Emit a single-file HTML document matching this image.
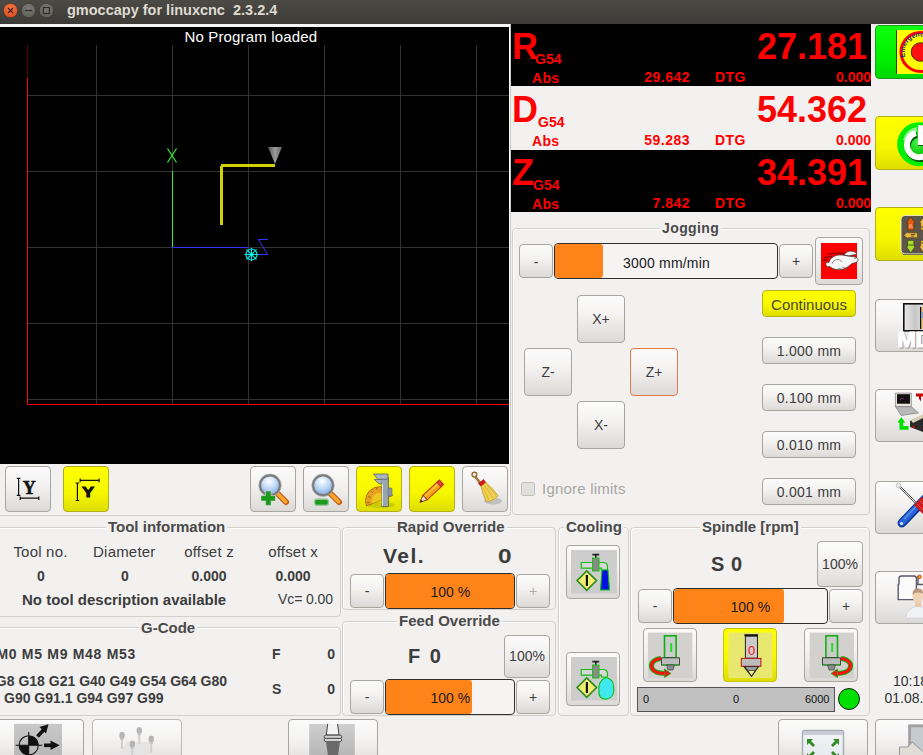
<!DOCTYPE html>
<html><head><meta charset="utf-8">
<style>
*{box-sizing:border-box;margin:0;padding:0}
html,body{width:923px;height:755px;overflow:hidden;background:#f2f1f0;font-family:"Liberation Sans",sans-serif;color:#3c3c3c;position:relative}
.a{position:absolute}
.btn{position:absolute;border:1px solid #a9a5a0;border-radius:4px;background:linear-gradient(#fbfbfb,#f4f3f2 40%,#dcdad7);}
.ybtn{position:absolute;border:1px solid #b4ae1c;border-radius:4px;background:linear-gradient(#ffff00,#f6f600 60%,#dede00);}
.frame{position:absolute;border:1px solid #d3cfca;border-radius:4px;box-shadow:inset 1px 1px 0 #fff}
.ftitle{position:absolute;background:#f2f1f0;font-weight:bold;font-size:14px;color:#4a4a4a;padding:0 2px;line-height:16px;white-space:nowrap}
.t{position:absolute;white-space:nowrap;line-height:1}
.red{color:#ff0000;font-weight:bold}
</style></head><body>
<!-- title bar -->
<div class="a" style="left:0;top:0;width:923px;height:24px;background:linear-gradient(#4b4a45,#3c3b37)"></div>

<svg class="a" style="left:0;top:0" width="60" height="22">
<defs><radialGradient id="cl" cx="0.5" cy="0.35" r="0.7"><stop offset="0" stop-color="#f47a48"/><stop offset="1" stop-color="#d9461c"/></radialGradient>
<radialGradient id="gr" cx="0.5" cy="0.35" r="0.7"><stop offset="0" stop-color="#7c7b76"/><stop offset="1" stop-color="#5c5b56"/></radialGradient></defs>
<circle cx="10.5" cy="10.5" r="7.3" fill="url(#cl)" stroke="#37362f" stroke-width="0.8"/>
<path d="M8 8 L13 13 M13 8 L8 13" stroke="#3a2010" stroke-width="1.1"/>
<circle cx="28.5" cy="10.5" r="7.3" fill="url(#gr)" stroke="#37362f" stroke-width="0.8"/>
<path d="M25 10.5 H32" stroke="#2e2d29" stroke-width="1.2"/>
<circle cx="46.4" cy="10.5" r="7.3" fill="url(#gr)" stroke="#37362f" stroke-width="0.8"/>
<rect x="43.4" y="7.5" width="6" height="6" fill="none" stroke="#2e2d29" stroke-width="1.2"/>
</svg>
<div class="t" style="left:67px;top:3px;font-size:14.5px;font-weight:bold;color:#dfdbd2">gmoccapy for linuxcnc&nbsp; 2.3.2.4</div>

<!-- graphics -->
<div class="a" style="left:0;top:24px;width:511px;height:3px;background:#f6f5f4"></div>
<div class="a" style="left:0;top:27px;width:509px;height:437px;background:#000;overflow:hidden">
<svg width="510" height="437" style="position:absolute;left:0;top:0">
<rect x="96" y="18" width="1" height="359" fill="#333333"/>
<rect x="172" y="18" width="1" height="359" fill="#333333"/>
<rect x="248" y="18" width="1" height="359" fill="#333333"/>
<rect x="324" y="18" width="1" height="359" fill="#333333"/>
<rect x="400" y="18" width="1" height="359" fill="#333333"/>
<rect x="476" y="18" width="1" height="359" fill="#333333"/>
<rect x="28" y="68" width="482" height="1" fill="#333333"/>
<rect x="28" y="144" width="482" height="1" fill="#333333"/>
<rect x="28" y="220" width="482" height="1" fill="#333333"/>
<rect x="28" y="296" width="482" height="1" fill="#333333"/>
<rect x="28" y="372" width="482" height="1" fill="#333333"/>
<rect x="27" y="18" width="1" height="33" fill="#5a0000"/>
<rect x="27" y="51" width="1" height="327" fill="#ff0000"/>
<rect x="27" y="377" width="483" height="1" fill="#ff0000"/>
<rect x="172" y="144" width="1" height="76" fill="#33ee33"/>
<path d="M167.5 121.5 L176.5 135.5 M176.5 121.5 L167.5 135.5" stroke="#33ee33" stroke-width="1.2" fill="none"/>
<rect x="172" y="220" width="76" height="1" fill="#3333ff"/>
<path d="M258 212.5 H268 M258.5 212.5 L267.5 227.5 M257 227.5 H268" stroke="#3333ff" stroke-width="1" fill="none"/>
<rect x="220" y="139" width="3" height="59" fill="#d2d200"/>
<rect x="221" y="137" width="54" height="3" fill="#d2d200"/>
<defs><linearGradient id="cg" x1="0" x2="1"><stop offset="0" stop-color="#555"/><stop offset="0.5" stop-color="#9a9a9a"/><stop offset="1" stop-color="#666"/></linearGradient></defs>
<path d="M268 120 L282 120 L275 137 Z" fill="url(#cg)"/>
<circle cx="251.5" cy="227.5" r="5.5" stroke="#00e8e8" stroke-width="1.2" fill="none"/>
<path d="M244.5 227.5 H258.5 M251.5 221.0 V234.0 M246.5 222.5 L256.5 232.5 M256.5 222.5 L246.5 232.5" stroke="#00e8e8" stroke-width="1.1" fill="none"/>
<circle cx="251.5" cy="227.5" r="1.5" fill="#00ffff"/>
</svg>
<div class="t" style="left:184.5px;top:2px;font-size:15px;color:#fff;letter-spacing:0.15px">No Program loaded</div>
</div>

<!-- DRO -->
<div class="a" style="left:511px;top:24px;width:360px;height:62px;background:#000"></div>
<div class="t red" style="left:512px;top:29px;font-size:36px">R</div>
<div class="t red" style="left:535px;top:52px;font-size:14px">G54</div>
<div class="t red" style="left:532px;top:71px;font-size:14px;letter-spacing:0.3px">Abs</div>
<div class="t red" style="right:56px;top:29px;font-size:36px">27.181</div>
<div class="t red" style="right:233px;top:70px;font-size:14px;letter-spacing:0.5px">29.642</div>
<div class="t red" style="left:715px;top:70px;font-size:14px;letter-spacing:0.4px">DTG</div>
<div class="t red" style="right:52px;top:70px;font-size:14px">0.000</div>
<div class="t red" style="left:512px;top:92px;font-size:36px">D</div>
<div class="t red" style="left:538px;top:115px;font-size:14px">G54</div>
<div class="t red" style="left:532px;top:134px;font-size:14px;letter-spacing:0.3px">Abs</div>
<div class="t red" style="right:56px;top:92px;font-size:36px">54.362</div>
<div class="t red" style="right:233px;top:133px;font-size:14px;letter-spacing:0.5px">59.283</div>
<div class="t red" style="left:715px;top:133px;font-size:14px;letter-spacing:0.4px">DTG</div>
<div class="t red" style="right:52px;top:133px;font-size:14px">0.000</div>
<div class="a" style="left:511px;top:150px;width:360px;height:62px;background:#000"></div>
<div class="t red" style="left:512px;top:155px;font-size:36px">Z</div>
<div class="t red" style="left:533px;top:178px;font-size:14px">G54</div>
<div class="t red" style="left:532px;top:197px;font-size:14px;letter-spacing:0.3px">Abs</div>
<div class="t red" style="right:56px;top:155px;font-size:36px">34.391</div>
<div class="t red" style="right:233px;top:196px;font-size:14px;letter-spacing:0.5px">7.842</div>
<div class="t red" style="left:715px;top:196px;font-size:14px;letter-spacing:0.4px">DTG</div>
<div class="t red" style="right:52px;top:196px;font-size:14px">0.000</div>
<!-- /DRO -->
<!-- TOOLBAR -->

<div class="btn" style="left:5px;top:466px;width:46px;height:46px"><svg width="44" height="44" style="position:absolute;left:0;top:0"><path d="M12.6 11.4 V28.3 M10.8 11.4 H14.4 M10.8 28.3 H14.4" stroke="#111" stroke-width="1.2" fill="none"/>
<text x="16.8" y="27" style="font-family:'Liberation Serif';font-weight:bold;font-size:18px" fill="#111" stroke="#111" stroke-width="0.5">Y</text>
<path d="M14.2 31.2 H32.8 M14.2 29.5 V33 M32.8 29.5 V33" stroke="#111" stroke-width="1.2" fill="none"/></svg></div>
<div class="ybtn" style="left:63px;top:466px;width:46px;height:46px"><svg width="44" height="44" style="position:absolute;left:0;top:0"><path d="M13.4 16 V33.5 M11.6 16 H15.2 M11.6 33.5 H15.2" stroke="#111" stroke-width="1.2" fill="none"/>
<text x="18.4" y="29.9" style="font-family:'Liberation Sans';font-weight:bold;font-size:15px" fill="#111" stroke="#111" stroke-width="1" transform="translate(-3.5,0) scale(1.18,1)">Y</text>
<path d="M16.2 13.4 H35.1 M16.2 11.6 V15.2 M35.1 11.6 V15.2" stroke="#111" stroke-width="1.2" fill="none"/></svg></div>
<div class="btn" style="left:250px;top:466px;width:46px;height:46px"><svg width="44" height="44" style="position:absolute;left:0;top:0"><defs><radialGradient id="mgp" cx="0.45" cy="0.3" r="0.75"><stop offset="0" stop-color="#ffffff"/><stop offset="0.45" stop-color="#c4dcf8"/><stop offset="1" stop-color="#78a8e4"/></radialGradient></defs>
<path d="M26.5 26.5 L35 35" stroke="#c4560a" stroke-width="6" stroke-linecap="round"/><path d="M26.8 26.8 L34.7 34.7" stroke="#f8a830" stroke-width="3.6" stroke-linecap="round"/>
<circle cx="19" cy="18.3" r="10" fill="url(#mgp)" stroke="#7c7c7c" stroke-width="2.4"/>
<circle cx="19" cy="18.3" r="11.3" fill="none" stroke="#b0b0b0" stroke-width="0.6"/><path d="M10.5 29 H15 V24.5 H19.5 V29 H24 V33.5 H19.5 V38 H15 V33.5 H10.5 Z" fill="#1c9a1c" stroke="#c8e8c8" stroke-width="1.4" paint-order="stroke"/><path d="M10.5 29 H15 V24.5 H19.5 V29 H24 V33.5 H19.5 V38 H15 V33.5 H10.5 Z" fill="#1c9a1c" stroke="#5a9a5a" stroke-width="0.5"/></svg></div>
<div class="btn" style="left:303px;top:466px;width:46px;height:46px"><svg width="44" height="44" style="position:absolute;left:0;top:0"><defs><radialGradient id="mgm" cx="0.45" cy="0.3" r="0.75"><stop offset="0" stop-color="#ffffff"/><stop offset="0.45" stop-color="#c4dcf8"/><stop offset="1" stop-color="#78a8e4"/></radialGradient></defs>
<path d="M26.5 26.5 L35 35" stroke="#c4560a" stroke-width="6" stroke-linecap="round"/><path d="M26.8 26.8 L34.7 34.7" stroke="#f8a830" stroke-width="3.6" stroke-linecap="round"/>
<circle cx="19" cy="18.3" r="10" fill="url(#mgm)" stroke="#7c7c7c" stroke-width="2.4"/>
<circle cx="19" cy="18.3" r="11.3" fill="none" stroke="#b0b0b0" stroke-width="0.6"/><rect x="10.5" y="32" width="14" height="6.4" rx="2" fill="#1c9a1c" stroke="#c8e8c8" stroke-width="1.4"/><rect x="10.5" y="32" width="14" height="6.4" rx="2" fill="none" stroke="#5a9a5a" stroke-width="0.5"/></svg></div>
<div class="ybtn" style="left:356px;top:466px;width:46px;height:46px"><svg width="44" height="44" style="position:absolute;left:0;top:0"><ellipse cx="24" cy="38" rx="14" ry="3" fill="#000" opacity="0.12"/>
<g transform="rotate(-22 21 30)"><path d="M7 34 A14 14 0 0 1 35 34 Z" fill="#e8a020" stroke="#a86a10" stroke-width="0.8"/>
<path d="M13 34 A8 8 0 0 1 29 34 Z" fill="#f0e020" opacity="0.6"/>
<path d="M9 31 L11 32 M12 26 L14 27.5 M17 22 L18 24 M23 21 L23 23 M29 23 L28 25" stroke="#8a5a10" stroke-width="0.7"/></g>
<rect x="25" y="10.5" width="6.5" height="29" fill="#9ba5ae" stroke="#5a636b" stroke-width="0.8"/>
<path d="M25.5 11 V38.5" stroke="#d8e0e6" stroke-width="1"/>
<path d="M16.5 7 H31 V12.3 H21 Z" fill="#a9b3bb" stroke="#5a636b" stroke-width="0.8"/>
<path d="M17.3 12.5 H25 V16.8 H22 Z" fill="#a9b3bb" stroke="#5a636b" stroke-width="0.8"/>
<rect x="31" y="21" width="4" height="8" rx="1" fill="#8d979f" stroke="#5a636b" stroke-width="0.6"/></svg></div>
<div class="ybtn" style="left:409px;top:466px;width:46px;height:46px"><svg width="44" height="44" style="position:absolute;left:0;top:0"><g transform="rotate(-43 23 23)"><rect x="12" y="20" width="20" height="6.2" fill="#f7a21a" stroke="#b83010" stroke-width="1"/>
<path d="M12 26.2 H32" stroke="#ffd040" stroke-width="1.2" transform="translate(0,-4)"/>
<rect x="31" y="20" width="3.5" height="6.2" fill="#e04040" stroke="#b83010" stroke-width="1"/>
<path d="M12 20 L5 23.1 L12 26.2 Z" fill="#f8d8c0" stroke="#702010" stroke-width="0.8"/>
<path d="M5 23.1 L7.5 22 V24.2 Z" fill="#400"/></g></svg></div>
<div class="btn" style="left:462px;top:466px;width:46px;height:46px"><svg width="44" height="44" style="position:absolute;left:0;top:0"><ellipse cx="30" cy="34" rx="9" ry="3.5" fill="#000" opacity="0.15"/>
<circle cx="11.4" cy="7.6" r="2.4" fill="none" stroke="#9a6a30" stroke-width="1.4"/>
<path d="M12.5 10 L18 17" stroke="#a87838" stroke-width="2.6" stroke-linecap="round"/>
<path d="M15.5 16.5 L20.5 12.5 L23 15.5 L18 19.5 Z" fill="#d81818" stroke="#801010" stroke-width="0.5"/>
<path d="M18 19.5 L23 15.5 C27 19 32 24 35 29 C31 33 26 35 23.5 34.5 C21 30 19 24 18 19.5 Z" fill="#f0d050" stroke="#b89020" stroke-width="0.7"/>
<path d="M20.5 21 L26 33 M22 19 L30 31 M24 18 L33 28" stroke="#c8a028" stroke-width="0.6"/></svg></div>
<!-- /TOOLBAR -->
<!-- JOG -->
<div class="a" style="left:-5px;top:24px;width:516px;height:492px;border:1px solid #cdc9c4;border-top:none;border-radius:0 0 4px 4px;box-shadow:inset -1px -1px 0 #fbfaf9"></div>
<div class="frame" style="left:512px;top:228px;width:358px;height:287px"></div>
<div class="ftitle" style="left:660px;top:220px;letter-spacing:0.4px">Jogging</div>
<div class="btn" style="left:519px;top:244px;width:34px;height:34px"><div class="t" style="left:0;width:32px;text-align:center;top:10px;font-size:14px">-</div></div>
<div class="a" style="left:554px;top:243px;width:224px;height:36px;border:1px solid #2f2f2f;border-radius:4px;background:#f5f4f3;overflow:hidden"><div class="a" style="left:0;top:0;width:48px;height:34px;background:#fe841a;border-radius:3px"></div><div class="t" style="left:68px;top:12px;font-size:14px;color:#1a1a1a;letter-spacing:0.2px">3000 mm/min</div></div>
<div class="btn" style="left:779px;top:244px;width:34px;height:34px"><div class="t" style="left:0;width:32px;text-align:center;top:9px;font-size:14px">+</div></div>
<div class="btn" style="left:815px;top:237px;width:48px;height:48px"><svg width="46" height="46" style="position:absolute;left:0;top:0">
<rect x="5" y="5" width="36" height="36" fill="#ff0000"/>
<path d="M12 16.5 Q20 14.5 28 15.5 M8 19.5 Q12 18.5 16 19 M6 22.5 Q9 21.5 12 22" stroke="#8a0000" stroke-width="1.3" fill="none"/>
<path d="M28 17 C31 12 38 12 41 16 C39 17 35 17 33 18 Z" fill="#f4f4f4" stroke="#333" stroke-width="0.7"/>
<path d="M10 27 C9 25 11 24 13 24.5 C14 19 20 16.5 26 17 C30 17.5 33 18.5 36 18.5 C39 18.5 42 20 42 22 C42 24 39 25 36 25.5 C34 27 32 29 30 30 C27 31.5 24 32 21 31.5 C18 31.5 15 30 14 28.5 C12 29 10 28.5 10 27 Z" fill="#f6f6f6" stroke="#333" stroke-width="0.7"/>
<path d="M16 26 C17 21 24 20 26 24" stroke="#555" stroke-width="0.6" fill="none"/>
<path d="M22 30 L28 32 M26 29 L32 31" stroke="#555" stroke-width="0.6"/>
<circle cx="39" cy="20.5" r="0.6" fill="#333"/>
</svg></div>
<div class="btn" style="left:577px;top:295px;width:48px;height:48px;"><div class="t" style="left:0;width:46px;text-align:center;top:16px;font-size:14px">X+</div></div>
<div class="btn" style="left:524px;top:348px;width:48px;height:48px;"><div class="t" style="left:0;width:46px;text-align:center;top:16px;font-size:14px">Z-</div></div>
<div class="btn" style="left:630px;top:348px;width:48px;height:48px;border-color:#e8794a;"><div class="t" style="left:0;width:46px;text-align:center;top:16px;font-size:14px">Z+</div></div>
<div class="btn" style="left:577px;top:401px;width:48px;height:48px;"><div class="t" style="left:0;width:46px;text-align:center;top:16px;font-size:14px">X-</div></div>
<div class="ybtn" style="left:762px;top:290px;width:94px;height:27px;border-color:#b9b31e"><div class="t" style="left:0;width:92px;text-align:center;top:6px;font-size:15px;color:#4a4838">Continuous</div></div>
<div class="btn" style="left:762px;top:337px;width:94px;height:27px"><div class="t" style="left:0;width:92px;text-align:center;top:6px;font-size:14px;letter-spacing:0.3px">1.000 mm</div></div>
<div class="btn" style="left:762px;top:384px;width:94px;height:27px"><div class="t" style="left:0;width:92px;text-align:center;top:6px;font-size:14px;letter-spacing:0.3px">0.100 mm</div></div>
<div class="btn" style="left:762px;top:431px;width:94px;height:27px"><div class="t" style="left:0;width:92px;text-align:center;top:6px;font-size:14px;letter-spacing:0.3px">0.010 mm</div></div>
<div class="btn" style="left:762px;top:478px;width:94px;height:27px"><div class="t" style="left:0;width:92px;text-align:center;top:6px;font-size:14px;letter-spacing:0.3px">0.001 mm</div></div>
<div class="a" style="left:521px;top:482px;width:14px;height:14px;border:1px solid #c4c1bc;border-radius:2px;background:#e2e0dd"></div>
<div class="t" style="left:542px;top:481px;font-size:15px;color:#a8a6a2;letter-spacing:0.22px">Ignore limits</div>
<!-- /JOG -->
<!-- BOTTOM -->
<div class="frame" style="left:-5px;top:527px;width:346px;height:90px"></div>
<div class="ftitle" style="left:106px;top:519px;font-size:15px">Tool information</div>
<div class="t" style="left:-9.5px;width:100px;text-align:center;top:544px;font-size:15px;letter-spacing:0.2px">Tool no.</div>
<div class="t" style="left:74.3px;width:100px;text-align:center;top:544px;font-size:15px;letter-spacing:0.2px">Diameter</div>
<div class="t" style="left:159.0px;width:100px;text-align:center;top:544px;font-size:15px;letter-spacing:0.2px">offset z</div>
<div class="t" style="left:243.0px;width:100px;text-align:center;top:544px;font-size:15px;letter-spacing:0.2px">offset x</div>
<div class="t" style="left:-9.0px;width:100px;text-align:center;top:569px;font-size:14px;font-weight:bold">0</div>
<div class="t" style="left:75.0px;width:100px;text-align:center;top:569px;font-size:14px;font-weight:bold">0</div>
<div class="t" style="left:159.0px;width:100px;text-align:center;top:569px;font-size:14px;font-weight:bold">0.000</div>
<div class="t" style="left:243.0px;width:100px;text-align:center;top:569px;font-size:14px;font-weight:bold">0.000</div>
<div class="t" style="left:22px;top:592px;font-size:15px;font-weight:bold">No tool description available</div>
<div class="t" style="left:278px;top:592px;font-size:14px;letter-spacing:-0.1px">Vc= 0.00</div>
<div class="frame" style="left:-5px;top:627px;width:346px;height:89px"></div>
<div class="ftitle" style="left:139px;top:620px;font-size:15px">G-Code</div>
<div class="t" style="right:787px;top:647px;font-size:14px;font-weight:bold;letter-spacing:0.7px">M0 M5 M9 M48 M53</div>
<div class="t" style="right:696px;top:674px;font-size:14px;font-weight:bold">G8 G18 G21 G40 G49 G54 G64 G80</div>
<div class="t" style="left:4px;top:691px;font-size:14px;font-weight:bold">G90 G91.1 G94 G97 G99</div>
<div class="t" style="left:272px;top:647px;font-size:14px;font-weight:bold">F</div>
<div class="t" style="right:588px;top:647px;font-size:14px;font-weight:bold">0</div>
<div class="t" style="left:272px;top:682px;font-size:14px;font-weight:bold">S</div>
<div class="t" style="right:588px;top:682px;font-size:14px;font-weight:bold">0</div>
<div class="frame" style="left:342px;top:527px;width:214px;height:83px"></div>
<div class="ftitle" style="left:395px;top:519px;font-size:15px">Rapid Override</div>
<div class="t" style="left:383px;top:545px;font-size:21px;font-weight:bold;letter-spacing:1.5px">Vel.</div>
<div class="t" style="left:498px;top:546px;font-size:20px;font-weight:bold;transform:scaleX(1.22);transform-origin:0 0">0</div>
<div class="btn" style="left:350px;top:574px;width:34px;height:34px"><div class="t" style="left:0;width:32px;text-align:center;top:9px;font-size:14px;color:#3c3c3c">-</div></div>
<div class="a" style="left:385px;top:573px;width:130px;height:36px;border:1px solid #2f2f2f;border-radius:4px;background:#f5f4f3;overflow:hidden"><div class="a" style="left:0;top:0;width:128px;height:34px;background:#fe841a;border-radius:3px"></div><div class="t" style="left:44.5px;top:11px;font-size:14px;color:#1a1a1a">100 %</div></div>
<div class="btn" style="left:516px;top:574px;width:34px;height:34px"><div class="t" style="left:0;width:32px;text-align:center;top:9px;font-size:14px;color:#b0aeaa">+</div></div>
<div class="frame" style="left:342px;top:621px;width:214px;height:95px"></div>
<div class="ftitle" style="left:397px;top:613px;font-size:15px">Feed Override</div>
<div class="t" style="left:408px;top:646px;font-size:20px;font-weight:bold;word-spacing:4px">F 0</div>
<div class="btn" style="left:504px;top:635px;width:46px;height:43px"><div class="t" style="left:0;width:44px;text-align:center;top:13px;font-size:14px;color:#3c3c3c">100%</div></div>
<div class="btn" style="left:350px;top:680px;width:34px;height:34px"><div class="t" style="left:0;width:32px;text-align:center;top:9px;font-size:14px;color:#3c3c3c">-</div></div>
<div class="a" style="left:385px;top:679px;width:130px;height:36px;border:1px solid #2f2f2f;border-radius:4px;background:#f5f4f3;overflow:hidden"><div class="a" style="left:0;top:0;width:86px;height:34px;background:#fe841a;border-radius:3px"></div><div class="t" style="left:44.5px;top:11px;font-size:14px;color:#1a1a1a">100 %</div></div>
<div class="btn" style="left:516px;top:680px;width:34px;height:34px"><div class="t" style="left:0;width:32px;text-align:center;top:9px;font-size:14px;color:#3c3c3c">+</div></div>
<div class="frame" style="left:558px;top:527px;width:71px;height:189px"></div>
<div class="ftitle" style="left:564px;top:519px;font-size:15px">Cooling</div>
<div class="btn" style="left:566px;top:545px;width:54px;height:54px"><svg width="52" height="52" style="position:absolute;left:0;top:0"><rect x="4" y="4" width="46" height="43.6" fill="#cdcdcd"/>
<path d="M25.4 8.6 H32.2 M28.8 8.6 V13" stroke="#222" stroke-width="1.6"/>
<path d="M14.2 16.5 H36 C39 16.5 40.5 18 40.5 21 V24 H34.5 V22.2 H14.2 Z" fill="#d8d8d8" stroke="#10c010" stroke-width="1.2"/>
<rect x="25.5" y="12" width="6.5" height="13" fill="#8a8a8a" stroke="#10c010" stroke-width="0.9"/>
<path d="M19.8 24.6 L29.8 34.6 L19.8 44.6 L9.8 34.6 Z" fill="#f0f070" stroke="#10a010" stroke-width="1.2"/>
<path d="M19.8 25.6 L28.8 34.6 L19.8 43.6 L10.8 34.6 Z" fill="none" stroke="#222" stroke-width="0.6"/>
<rect x="18.8" y="29" width="2.2" height="11" fill="#111"/><path d="M35 24 H41 L42.5 44 H33.5 Z" fill="#0010e0" stroke="#10c010" stroke-width="1.1"/></svg></div>
<div class="btn" style="left:566px;top:652px;width:54px;height:54px"><svg width="52" height="52" style="position:absolute;left:0;top:0"><rect x="4" y="4" width="46" height="43.6" fill="#cdcdcd"/>
<path d="M25.4 8.6 H32.2 M28.8 8.6 V13" stroke="#222" stroke-width="1.6"/>
<path d="M14.2 16.5 H36 C39 16.5 40.5 18 40.5 21 V24 H34.5 V22.2 H14.2 Z" fill="#d8d8d8" stroke="#10c010" stroke-width="1.2"/>
<rect x="25.5" y="12" width="6.5" height="13" fill="#8a8a8a" stroke="#10c010" stroke-width="0.9"/>
<path d="M19.8 24.6 L29.8 34.6 L19.8 44.6 L9.8 34.6 Z" fill="#f0f070" stroke="#10a010" stroke-width="1.2"/>
<path d="M19.8 25.6 L28.8 34.6 L19.8 43.6 L10.8 34.6 Z" fill="none" stroke="#222" stroke-width="0.6"/>
<rect x="18.8" y="29" width="2.2" height="11" fill="#111"/><path d="M38 24.5 C44 25 47 29 46.5 34 C48 38 46 45 40 46 C35 47 31 43 32 38 C31 33 33 27 38 24.5 Z" fill="#40e8f0" stroke="#10c010" stroke-width="1.1"/></svg></div>
<div class="frame" style="left:630px;top:527px;width:240px;height:189px"></div>
<div class="ftitle" style="left:700px;top:519px;font-size:15px">Spindle [rpm]</div>
<div class="t" style="left:711px;top:554px;font-size:20px;font-weight:bold;word-spacing:1px">S 0</div>
<div class="btn" style="left:817px;top:541px;width:46px;height:46px"><div class="t" style="left:0;width:44px;text-align:center;top:15px;font-size:14px;color:#3c3c3c">100%</div></div>
<div class="btn" style="left:638px;top:589px;width:34px;height:34px"><div class="t" style="left:0;width:32px;text-align:center;top:9px;font-size:14px;color:#3c3c3c">-</div></div>
<div class="a" style="left:673px;top:588px;width:155px;height:36px;border:1px solid #2f2f2f;border-radius:4px;background:#f5f4f3;overflow:hidden"><div class="a" style="left:0;top:0;width:110px;height:34px;background:#fe841a;border-radius:3px"></div><div class="t" style="left:56.5px;top:11px;font-size:14px;color:#1a1a1a">100 %</div></div>
<div class="btn" style="left:829px;top:589px;width:34px;height:34px"><div class="t" style="left:0;width:32px;text-align:center;top:9px;font-size:14px;color:#3c3c3c">+</div></div>
<div class="btn" style="left:643px;top:628px;width:54px;height:54px"><svg width="52" height="52" style="position:absolute;left:0;top:0"><rect x="3.9" y="3.6" width="44.4" height="45.5" fill="#d2d1cd"/>
<rect x="20.5" y="6.8" width="11.6" height="22" fill="#cbcbcb" stroke="#10b010" stroke-width="1.6"/>
<rect x="26.2" y="14" width="2" height="9" fill="#20e020"/>
<rect x="17.6" y="28.8" width="17.8" height="7.2" fill="#bcbcbc" stroke="#222" stroke-width="0.8"/>
<path d="M17.6 36 H35.4" stroke="#10b010" stroke-width="1"/>
<path d="M22.5 36 H30.5 L29 41 H24 Z" fill="#8a8a8a" stroke="#333" stroke-width="0.6"/>
<path d="M17 29.5 C9 30.5 6 35 8 39.5 C10 43 15 44.5 22 44.5" fill="none" stroke="#10b010" stroke-width="5"/>
<path d="M17 29.5 C9 30.5 6 35 8 39.5 C10 43 15 44.5 22 44.5" fill="none" stroke="#ff1010" stroke-width="3"/>
<path d="M20.5 40 L27 44.5 L20.5 48.5 Z" fill="#ff1010" stroke="#10b010" stroke-width="0.8"/></svg></div>
<div class="ybtn" style="left:723px;top:628px;width:54px;height:54px;border-color:#c8c200"><svg width="52" height="52" style="position:absolute;left:0;top:0"><rect x="4.5" y="3.6" width="44" height="45.5" fill="#e8e870"/>
<rect x="20.4" y="5.2" width="13.6" height="2" fill="#111"/>
<rect x="21.4" y="7.2" width="12.1" height="22" fill="#cacaca" stroke="#222" stroke-width="1"/>
<text x="27.6" y="25.8" text-anchor="middle" style="font-family:'Liberation Sans';font-size:13px" fill="#ff1010">0</text>
<rect x="17.3" y="29.4" width="19.6" height="7.9" fill="#bcbcbc" stroke="#c01010" stroke-width="1"/>
<path d="M19 37.3 H35.5 L27.5 48.3 Z" fill="#222"/>
<path d="M21.5 38 H33.5 L31 41.5 H24 Z" fill="#999"/>
<path d="M24.5 42 H30.5 L27.5 46.5 Z" fill="#f0f070"/></svg></div>
<div class="btn" style="left:804px;top:628px;width:54px;height:54px"><svg width="52" height="52" style="position:absolute;left:0;top:0"><g transform="translate(53,0) scale(-1,1)"><rect x="3.9" y="3.6" width="44.4" height="45.5" fill="#d2d1cd"/>
<rect x="20.5" y="6.8" width="11.6" height="22" fill="#cbcbcb" stroke="#10b010" stroke-width="1.6"/>
<rect x="24.8" y="14" width="2" height="9" fill="#20e020"/>
<rect x="17.6" y="28.8" width="17.8" height="7.2" fill="#bcbcbc" stroke="#222" stroke-width="0.8"/>
<path d="M17.6 36 H35.4" stroke="#10b010" stroke-width="1"/>
<path d="M22.5 36 H30.5 L29 41 H24 Z" fill="#8a8a8a" stroke="#333" stroke-width="0.6"/>
<path d="M17 29.5 C9 30.5 6 35 8 39.5 C10 43 15 44.5 22 44.5" fill="none" stroke="#10b010" stroke-width="5"/>
<path d="M17 29.5 C9 30.5 6 35 8 39.5 C10 43 15 44.5 22 44.5" fill="none" stroke="#ff1010" stroke-width="3"/>
<path d="M20.5 40 L27 44.5 L20.5 48.5 Z" fill="#ff1010" stroke="#10b010" stroke-width="0.8"/></g></svg></div>
<div class="a" style="left:637px;top:687px;width:198px;height:25px;border:1px solid #555;background:#c0c0c0"></div>
<div class="t" style="left:643px;top:694px;font-size:11px;color:#111">0</div>
<div class="t" style="left:733px;top:694px;font-size:11px;color:#111">0</div>
<div class="t" style="left:805px;top:694px;font-size:11px;color:#111">6000</div>
<div class="a" style="left:838px;top:688px;width:22px;height:22px;border-radius:50%;background:#00e000;border:1.5px solid #1a1a1a"></div>
<div class="btn" style="left:-6px;top:719px;width:90px;height:50px" ><svg width="88" height="40" style="position:absolute;left:0;top:0"><defs><linearGradient id="bg1" x1="0" y1="0" x2="0" y2="1"><stop offset="0" stop-color="#c8c8c8"/><stop offset="1" stop-color="#b4b4b4"/></linearGradient></defs><rect x="19.1" y="3.9" width="47.9" height="40" fill="url(#bg1)"/>
<circle cx="33.7" cy="25.3" r="9.6" fill="none" stroke="#111" stroke-width="1.1"/>
<path d="M33.7 25.3 V15.7 A9.6 9.6 0 0 1 43.3 25.3 Z M33.7 25.3 V34.9 A9.6 9.6 0 0 1 24.1 25.3 Z" fill="#111"/>
<path d="M20.7 25.3 H47.3 M33.7 12 V40" stroke="#111" stroke-width="1.1"/>
<path d="M42.5 16.5 L49 9.5" stroke="#111" stroke-width="3.6"/><path d="M53.5 4.2 L44.5 7 L51 13.5 Z" fill="#111"/>
<path d="M49 25.3 H57" stroke="#111" stroke-width="3.6"/><path d="M64.6 25.3 L55.5 20.5 V30 Z" fill="#111"/></svg></div>
<div class="btn" style="left:92px;top:719px;width:90px;height:50px;border-color:#bdb9b4"><svg width="88" height="40" style="position:absolute;left:0;top:0"><path d="M23 40 L33.8 22 H56 L57 40 Z" fill="#e4e4e4"/><rect x="28" y="17" width="2" height="12" fill="#cfcfcf"/><rect x="26.4" y="12" width="5.2" height="6.5" rx="2" fill="#b4b4b4"/><rect x="27.2" y="18" width="3.6" height="2" fill="#c4c4c4"/><rect x="45.3" y="12.2" width="2" height="12" fill="#cfcfcf"/><rect x="43.699999999999996" y="7.199999999999999" width="5.2" height="6.5" rx="2" fill="#b4b4b4"/><rect x="44.5" y="13.2" width="3.6" height="2" fill="#c4c4c4"/><rect x="57.2" y="20.8" width="2" height="12" fill="#cfcfcf"/><rect x="55.6" y="15.8" width="5.2" height="6.5" rx="2" fill="#b4b4b4"/><rect x="56.400000000000006" y="21.8" width="3.6" height="2" fill="#c4c4c4"/><rect x="38.3" y="25.7" width="2" height="12" fill="#cfcfcf"/><rect x="36.699999999999996" y="20.7" width="5.2" height="6.5" rx="2" fill="#b4b4b4"/><rect x="37.5" y="26.7" width="3.6" height="2" fill="#c4c4c4"/></svg></div>
<div class="btn" style="left:288px;top:719px;width:90px;height:50px" ><svg width="88" height="40" style="position:absolute;left:0;top:0"><defs><linearGradient id="tg" x1="0" y1="0" x2="0" y2="1"><stop offset="0" stop-color="#cfcfcf"/><stop offset="1" stop-color="#b0b0b0"/></linearGradient></defs>
<rect x="20.2" y="4" width="45.6" height="40" fill="url(#tg)"/>
<path d="M38.7 4 L37.3 15 H50 L48.6 4" fill="#f4f4f4" stroke="#444" stroke-width="1"/>
<rect x="35.2" y="15.2" width="17.6" height="3.2" rx="1.6" fill="#d4d4d4" stroke="#444" stroke-width="0.9"/>
<rect x="35.2" y="18.4" width="17.6" height="3.2" rx="1.6" fill="#d4d4d4" stroke="#444" stroke-width="0.9"/>
<path d="M37 21.6 H51 L49 36 H39 Z" fill="#6a6a6a"/></svg></div>
<div class="btn" style="left:778px;top:719px;width:90px;height:50px" ><svg width="88" height="40" style="position:absolute;left:0;top:0"><defs><linearGradient id="fg" x1="0" y1="0" x2="0" y2="1"><stop offset="0" stop-color="#f4f6f8"/><stop offset="1" stop-color="#dfe3e8"/></linearGradient></defs>
<rect x="23.5" y="10.5" width="41" height="40" rx="2" fill="url(#fg)" stroke="#a8acb4" stroke-width="1.5"/>
<rect x="24" y="11" width="40" height="4" fill="#c8ccd2"/>
<path d="M28 19 L34 19 L32 21 L36 25 L34 27 L30 23 L28 25 Z" fill="#2f8a1f"/>
<path d="M60 19 L54 19 L56 21 L52 25 L54 27 L58 23 L60 25 Z" fill="#2f8a1f"/>
<path d="M28 39 L34 39 L32 37 L36 33 L34 31 L30 35 L28 33 Z" fill="#2f8a1f"/>
<path d="M60 39 L54 39 L56 37 L52 33 L54 31 L58 35 L60 33 Z" fill="#2f8a1f"/></svg></div>
<!-- /BOTTOM -->
<!-- RIGHT COL -->
<div class="a" style="left:875px;top:25px;width:60px;height:54px;border:1px solid #1f9a1f;border-radius:4px;background:linear-gradient(#10ff10,#00f000 60%,#00d800);overflow:hidden">
<svg width="60" height="54" style="position:absolute;left:-1px;top:-1px">
<rect x="21" y="5" width="40" height="44" fill="#ffff00"/><rect x="21" y="5" width="1" height="44" fill="#333"/>
<circle cx="45.5" cy="27" r="19.5" fill="none" stroke="#ff0000" stroke-width="3"/>
<circle cx="45.5" cy="27" r="9.3" fill="#ff1010" stroke="#222" stroke-width="0.8"/>
<path id="arc" d="M30.5 32 A15 15 0 0 1 60 22" fill="none"/>
<text style="font-family:'Liberation Sans';font-size:6.8px;font-weight:bold" fill="#262678" letter-spacing="0"><textPath href="#arc">Emergency</textPath></text>
</svg></div>
<div class="ybtn" style="left:875px;top:116px;width:60px;height:54px;overflow:hidden">
<svg width="60" height="54" style="position:absolute;left:-1px;top:-1px">
<defs><radialGradient id="pwg" cx="0.45" cy="0.35" r="0.7"><stop offset="0" stop-color="#50f050"/><stop offset="1" stop-color="#00c800"/></radialGradient></defs>
<circle cx="44.2" cy="28.2" r="22" fill="#00ee00"/>
<path d="M28 24 A16.5 16.5 0 0 1 42 11 L42 16 A12 12 0 0 0 32 25 Z" fill="#b0f4b0" opacity="0.8"/>
<circle cx="44.2" cy="29.2" r="9.5" fill="url(#pwg)"/>
<path d="M41.5 18 A12.2 12.2 0 1 0 47 18" fill="none" stroke="#005000" stroke-width="6" transform="translate(0.6,0.9)"/>
<path d="M41 17.2 A12.2 12.2 0 1 0 47.4 17.2" fill="none" stroke="#fff" stroke-width="6"/>
<rect x="43" y="9.2" width="7" height="20.6" fill="#004000"/>
<rect x="43" y="9.2" width="7" height="19.8" fill="#fff"/>
</svg></div>
<div class="ybtn" style="left:875px;top:207px;width:60px;height:54px;overflow:hidden">
<svg width="60" height="54" style="position:absolute;left:-1px;top:-1px">
<rect x="26.5" y="9" width="40" height="39" rx="4" fill="#2e2a22"/>
<rect x="26" y="8.4" width="39" height="38.5" rx="4" fill="#5d5548" stroke="#f4f0e0" stroke-width="0.9"/>
<path d="M35.8 10.3 L40.2 15.8 H38.8 V23 H32.8 V15.8 H31.4 Z" fill="#e85a10" stroke="#3a2a10" stroke-width="0.5"/>
<path d="M34 18 H37 M33.5 20 H38" stroke="#ffd0b0" stroke-width="0.8"/>
<path d="M28.6 28.2 L33.2 24.6 V25.8 H42.5 V30.7 H33.2 V31.8 Z" fill="#e8b840" stroke="#3a2a10" stroke-width="0.5"/>
<path d="M36 27.5 H40 M36 29 H39" stroke="#3a2a10" stroke-width="0.7"/>
<path d="M35.8 45.8 L40.3 39.2 H38.8 V33.4 H32.8 V39.2 H31.3 Z" fill="#a8e030" stroke="#3a2a10" stroke-width="0.5"/>
<path d="M33.5 38 H38" stroke="#2a3a10" stroke-width="0.8"/>
<path d="M48.5 10.3 L53 15.8 H51.5 V23 H45.5 V15.8 H44 Z" fill="#e8b840" stroke="#3a2a10" stroke-width="0.5"/>
<path d="M48.5 45.8 L53 39.2 H51.5 V33.4 H45.5 V39.2 H44 Z" fill="#e8b840" stroke="#3a2a10" stroke-width="0.5"/>
<path d="M46 20 H51 M46 36 H51" stroke="#3a2a10" stroke-width="0.8"/>
</svg></div>
<div class="btn" style="left:875px;top:299px;width:60px;height:53px;overflow:hidden"><svg width="60" height="53" style="position:absolute;left:-1px;top:-1px" ><defs><linearGradient id="mdig" x1="0" x2="1"><stop offset="0" stop-color="#e8e8e8"/><stop offset="0.5" stop-color="#c8c8c8"/><stop offset="1" stop-color="#e0e0e0"/></linearGradient></defs>
<rect x="28.8" y="4.8" width="22" height="27" fill="url(#mdig)" stroke="#111" stroke-width="1.6"/>
<rect x="45" y="8" width="1.5" height="22" fill="#111"/><rect x="46.5" y="8" width="12" height="22" fill="#f0c070"/><rect x="46.5" y="13" width="12" height="6" fill="#80a8d8"/>
<text x="23.5" y="48.5" style="font-family:'Liberation Sans';font-weight:bold;font-size:22px" fill="#444" stroke="#444" stroke-width="1.2" opacity="0.45">MDI</text>
<text x="22.5" y="47.5" style="font-family:'Liberation Sans';font-weight:bold;font-size:22px" fill="#fff" stroke="#fff" stroke-width="1.2">MDI</text></svg></div>
<div class="btn" style="left:875px;top:389px;width:60px;height:53px;overflow:hidden"><svg width="60" height="53" style="position:absolute;left:-1px;top:-1px" ><path d="M20.4 4.1 H36.3 V17.7 H20.4 Z" fill="#e8e4e0" stroke="#666" stroke-width="0.6"/>
<rect x="22" y="5.2" width="13" height="9.5" fill="#111"/>
<path d="M25 11 L27 9 L29 10" stroke="#9030a0" stroke-width="0.8" fill="none"/>
<path d="M20.5 17.7 H36.5 L43.5 24 L26 26.5 Z" fill="#b8b8b8" stroke="#777" stroke-width="0.6"/>
<path d="M26.3 28.2 L30.3 33.5 H28.3 V37 H33.5 V40.7 H24.5 V33.5 H22.3 Z" fill="#00e000"/>
<path d="M41 4.5 H48 V7.5 H46 V12.5 L43.5 9 H44 V7.5 H41 Z" fill="#c00000"/>
<path d="M35 32 L48 26 V43 L35 38 Z" fill="#2a2a2a"/><path d="M36 31.5 L48 25.5 V29 L38 34 Z" fill="#d8d0b0"/>
<circle cx="38.5" cy="38" r="1.2" fill="#e00000"/></svg></div>
<div class="btn" style="left:875px;top:481px;width:60px;height:53px;overflow:hidden"><svg width="60" height="53" style="position:absolute;left:-1px;top:-1px" ><path d="M23 4 L41.5 22.5" stroke="#555" stroke-width="2.2"/><path d="M23 4 L41.5 22.5" stroke="#eee" stroke-width="0.9"/>
<circle cx="23.5" cy="4.5" r="2.3" fill="#e8e8e8" stroke="#aaa" stroke-width="0.6"/>
<path d="M52 16 L27 42" stroke="#0a38a0" stroke-width="9" stroke-linecap="round"/>
<path d="M51 16.5 L27 41.5" stroke="#2a64d8" stroke-width="6" stroke-linecap="round"/>
<path d="M49 17 L29 38" stroke="#5a90f0" stroke-width="1.5"/>
<circle cx="26.5" cy="42.5" r="1.6" fill="#d8e8ff"/>
<path d="M39 24 L47 16 L56 25 L48 33 Z" fill="#d01818"/><path d="M42 23 L50 31 M45 20 L53 28" stroke="#f06060" stroke-width="0.8"/></svg></div>
<div class="btn" style="left:875px;top:571px;width:60px;height:53px;overflow:hidden"><svg width="60" height="53" style="position:absolute;left:-1px;top:-1px" ><path d="M24 13 V7.5 Q24 5 26.5 5 H39 Q41.4 5 41.4 7.5 V28.6 H23.2 V13.5 Z" fill="#fbfbfb" stroke="#5a5a6a" stroke-width="1.4"/>
<path d="M41.4 13.5 H48 M43 5 V13.5" stroke="#5a5a6a" stroke-width="1.4" fill="none"/>
<circle cx="44.5" cy="5.8" r="1.8" fill="#f0a010" stroke="#c02010" stroke-width="0.7"/>
<path d="M31 47 C31 40 36 36 43 35.5 C50 36 55 40 55 47 Z" fill="#f0f2f6" stroke="#c8ccd8" stroke-width="0.6"/>
<rect x="40" y="31" width="6" height="5" fill="#e8c8a8"/>
<ellipse cx="42.8" cy="25.5" rx="5.2" ry="6.6" fill="#f2d2b4"/>
<path d="M37.6 24 C37.5 18.5 40 17.5 43 17.5 C46 17.5 48.2 19 48.2 23 C46 21 40 20.5 37.6 24 Z" fill="#b89878"/></svg></div>
<div class="t" style="left:893px;top:674px;font-size:14px;color:#333">10:18</div>
<div class="t" style="left:884.5px;top:691px;font-size:14px;color:#333">01.08.</div>
<div class="btn" style="left:875px;top:719px;width:60px;height:50px"><svg width="58" height="48" style="position:absolute;left:0;top:0"><rect x="32.2" y="4.4" width="30" height="40" fill="#a0a0a0"/><rect x="35" y="7.2" width="28" height="37" fill="#c4cad0"/><path d="M23.5 27 L32 27 L36 22 L52 36 L44 46 L23.5 46 Z" fill="#e0dcd8" stroke="#9a9a9a" stroke-width="1"/></svg></div>
<!-- /RIGHT COL -->
</body></html>
